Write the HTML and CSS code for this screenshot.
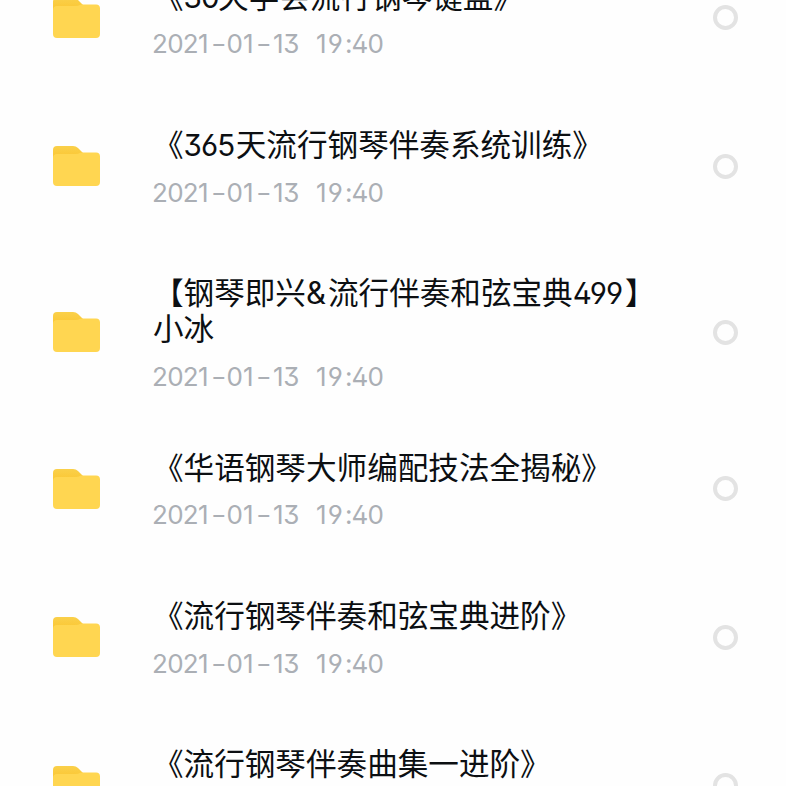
FILE: index.html
```html
<!DOCTYPE html>
<html lang="zh-CN">
<head>
<meta charset="utf-8">
<title>文件列表</title>
<link rel="stylesheet" href="styles.css">
</head>
<body>
<svg width="0" height="0" class="defs" aria-hidden="true">
  <defs>
    <linearGradient id="tab" x1="0" y1="0" x2="0" y2="1"><stop offset="0" stop-color="#fad04a"/><stop offset="1" stop-color="#fbc52f"/></linearGradient>
    <symbol id="folder" viewBox="0 0 47 40">
      <path fill="url(#tab)" d="M4 0H20Q23 0 25 2L30 7V14H0V4Q0 0 4 0Z"/>
      <path fill="#ffd651" d="M0 12Q0 8 4 8H22Q25 8 28 6.5H43Q47 6.5 47 10.5V36Q47 40 43 40H4Q0 40 0 36Z"/>
    </symbol>
  </defs>
</svg>
<ul class="list">
  <li class="row"><svg class="folder"><use href="#folder"/></svg><div class="info"><div class="name">《<span class="num two">30</span>天学会流行钢琴键盘》</div><div class="date"><span>2021</span><span>-</span><span>01</span><span>-</span><span>13</span><span>19</span><span>:</span><span>40</span></div></div><span class="radio"></span></li>
  <li class="row"><svg class="folder"><use href="#folder"/></svg><div class="info"><div class="name">《<span class="num">365</span>天流行钢琴伴奏系统训练》</div><div class="date"><span>2021</span><span>-</span><span>01</span><span>-</span><span>13</span><span>19</span><span>:</span><span>40</span></div></div><span class="radio"></span></li>
  <li class="row double"><svg class="folder"><use href="#folder"/></svg><div class="info"><div class="name">【钢琴即兴<span class="num amp">&amp;</span>流行伴奏和弦宝典<span class="num">499</span>】<br>小冰</div><div class="date"><span>2021</span><span>-</span><span>01</span><span>-</span><span>13</span><span>19</span><span>:</span><span>40</span></div></div><span class="radio"></span></li>
  <li class="row"><svg class="folder"><use href="#folder"/></svg><div class="info"><div class="name">《华语钢琴大师编配技法全揭秘》</div><div class="date"><span>2021</span><span>-</span><span>01</span><span>-</span><span>13</span><span>19</span><span>:</span><span>40</span></div></div><span class="radio"></span></li>
  <li class="row"><svg class="folder"><use href="#folder"/></svg><div class="info"><div class="name">《流行钢琴伴奏和弦宝典进阶》</div><div class="date"><span>2021</span><span>-</span><span>01</span><span>-</span><span>13</span><span>19</span><span>:</span><span>40</span></div></div><span class="radio"></span></li>
  <li class="row"><svg class="folder"><use href="#folder"/></svg><div class="info"><div class="name">《流行钢琴伴奏曲集一进阶》</div><div class="date"><span>2021</span><span>-</span><span>01</span><span>-</span><span>13</span><span>19</span><span>:</span><span>40</span></div></div><span class="radio"></span></li>
</ul>
</body>
</html>
```
FILE: styles.css
```css
html {
  overflow: hidden;
}
body {
  margin: 0;
  height: 786px;
  overflow: hidden;
  background: #fefefe;
  font-family: "Noto Sans CJK SC", sans-serif;
}
.defs { display: block; }
.list {
  list-style: none;
  margin: -56.5px 0 0;
  padding: 0;
}
.row {
  display: flex;
  align-items: center;
  box-sizing: border-box;
  height: 148.4px;
  padding: 35.2px 48px 35.2px 53px;
}
.row.double {
  height: 174.4px;
  padding-bottom: 25.2px;
}
.folder {
  flex: none;
  width: 47px;
  height: 40px;
}
.info {
  flex: 1;
  margin-left: 53px;
}
.name {
  margin: -2.6px 0 18.8px;
  font-size: 30.6px;
  line-height: 36px;
  color: #0c0f12;
  white-space: nowrap;
}
.num {
  display: inline-block;
  width: 52.2px;
  font-family: Inter, sans-serif;
  font-size: 29.5px;
  line-height: 1;
  font-feature-settings: "ss01";
  letter-spacing: -0.9px;
}
.num.two { width: 34.5px; }
.num.amp {
  width: 22px;
  font-size: 31px;
}
.date {
  display: flex;
  height: 25px;
  margin-left: -1px;
  font-family: Inter, sans-serif;
  font-size: 26px;
  line-height: 25px;
  color: #abafb5;
  font-feature-settings: "ss01";
  letter-spacing: -0.7px;
}
.date span { width: 29px; }
.date span:nth-child(1) { width: 61px; }
.date span:nth-child(2),
.date span:nth-child(4) {
  width: 13.5px;
  transform: scaleX(1.3);
}
.date span:nth-child(3) {
  width: 31px;
  letter-spacing: 0.2px;
}
.date span:nth-child(5) {
  width: 43px;
  padding-left: 2px;
  letter-spacing: -0.3px;
}
.date span:nth-child(6) {
  width: 29px;
  letter-spacing: 1.2px;
}
.date span:nth-child(7) { width: 6.5px; }
.radio {
  flex: none;
  box-sizing: border-box;
  width: 25px;
  height: 25px;
  border: 4px solid #e3e3e3;
  border-radius: 50%;
}
```
